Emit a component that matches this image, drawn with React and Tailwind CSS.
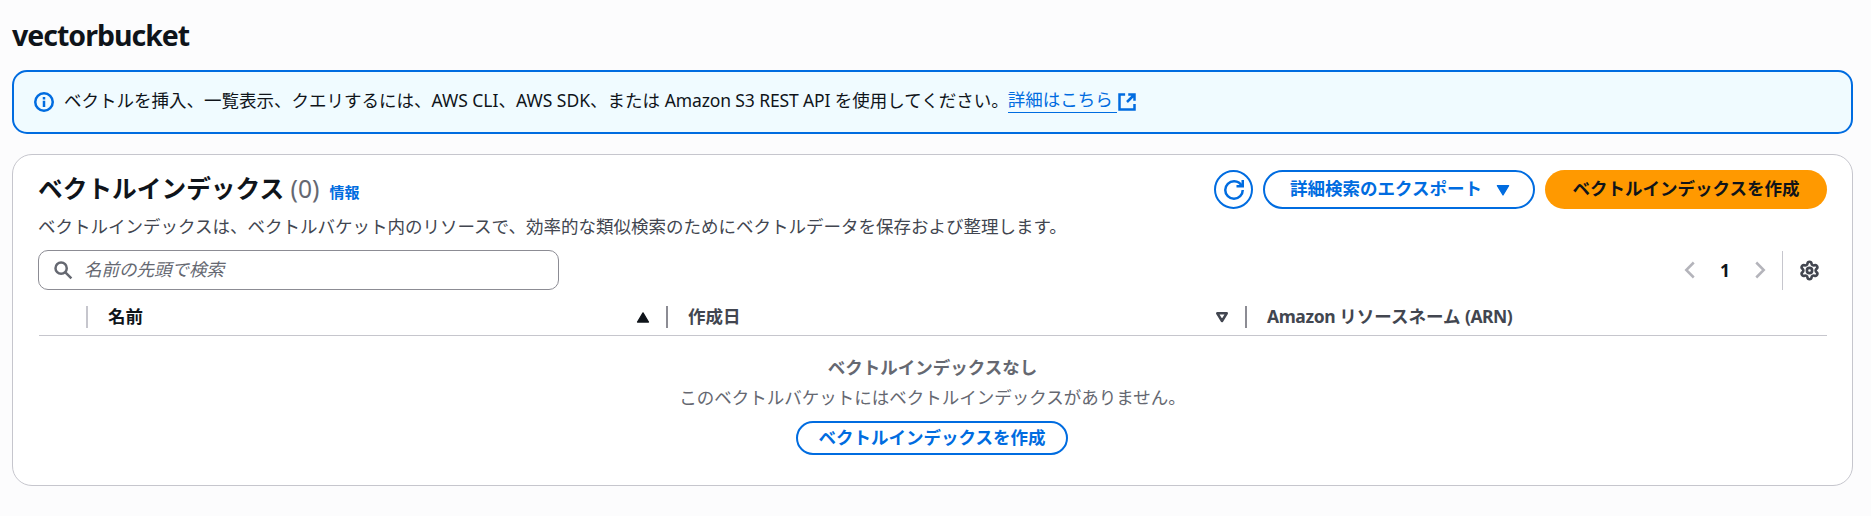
import { Settings } from 'lucide-react';

const svg = 'fill-none stroke-current stroke-2';

function Refresh() {
  return (
    <svg viewBox="0 0 16 16" className={svg + ' h-5 w-5'}>
      <path d="M10 5h5V0" />
      <path d="M15 8a7 7 0 1 1-7-7 6.87 6.87 0 0 1 6.3 4" />
    </svg>
  );
}

function Info() {
  return (
    <svg viewBox="0 0 16 16" className={svg + ' h-5 w-5 shrink-0'}>
      <circle cx="8" cy="8" r="7" />
      <path d="M8 12V7M8 6V4" />
    </svg>
  );
}

function External() {
  return (
    <svg viewBox="0 0 16 16" className={svg + ' h-5 w-5'}>
      <path d="M14 9.500V14H2V2h4.500" />
      <path d="M9 2h5v5M14 2 8 8" />
    </svg>
  );
}

const blue = 'text-[#006ce0]';

export default function App() {
  return (
    <div className="h-[516px] w-[1871px] bg-[#fcfcfd] pl-3 pr-[18px] pt-[17px] font-['Noto_Sans','Noto_Sans_CJK_JP',sans-serif] text-[17.5px] leading-[25px] text-[#0f141a]">
      <h1 className="h-[53px] text-[28.5px] font-bold leading-[36px] tracking-[-1px]">vectorbucket</h1>
      <div className={`flex h-16 items-center rounded-[15px] border-2 border-[#006ce0] bg-[#f0fbff] pl-5 ${blue}`}>
        <Info />
        <p className="ml-[10px] whitespace-nowrap pb-1 text-[#0f141a]">
          ベクトルを挿入、一覧表示、クエリするには、<span className="tracking-[-0.02px]">AWS CLI</span>、AWS SDK、または <span className="tracking-[-0.12px]">Amazon S3 REST API </span>を使用してください。
        </p>
        <a className="ml-[-1px] flex items-center whitespace-nowrap"><span className="mb-1 whitespace-pre border-b border-[#006ce0]">詳細はこちら </span><External /></a>
      </div>

      <section className="mt-5 h-[332px] rounded-[20px] border border-[#c6c6cd] bg-white pl-[26px] pr-[25px] pt-[15px]">
        <div className="-ml-px flex h-[39px] items-center gap-[10px]">
          <h2 className="whitespace-nowrap pb-px text-[24.7px] font-bold leading-[30px]">
            ベクトルインデックス <span className="font-normal text-[#656871]">(0)</span>
          </h2>
          <a className={`mt-[5px] text-[15px] font-bold ${blue}`}>情報</a>
          <div className="ml-auto flex gap-[10px] font-bold">
            <button className={`flex h-[39px] w-[39px] items-center justify-center rounded-full border-2 border-[#006ce0] ${blue}`}><Refresh /></button>
            <button className={`flex h-[39px] w-[272px] items-center rounded-full border-2 border-[#006ce0] pl-[25px] ${blue}`}>
              <span className="pb-[2px]">詳細検索のエクスポート</span>
              <svg viewBox="0 0 16 16" className="ml-[11px] h-5 w-5 fill-current"><path d="M3.500 4.500h9l-4.500 7.500z" stroke="currentColor" strokeLinejoin="round" /></svg>
            </button>
            <button className="h-[39px] w-[282px] rounded-full bg-[#ff9900] pb-[2px]">ベクトルインデックスを作成</button>
          </div>
        </div>
        <p className="-ml-px mt-[5px] text-[#424650]">ベクトルインデックスは、ベクトルバケット内のリソースで、効率的な類似検索のためにベクトルデータを保存および整理します。</p>

        <div className="mt-[11px] flex h-10 items-center">
          <div className="-ml-px flex h-10 w-[521px] items-center rounded-[10px] border border-[#8c8c94] pl-[14px] text-[#656871]">
            <svg viewBox="0 0 16 16" className={svg + ' h-5 w-5'}><circle cx="6.500" cy="6.500" r="4.500" /><path d="m9.700 9.700 5 5" /></svg>
            <span className="ml-[11px] pb-[2px] italic">名前の先頭で検索</span>
          </div>
          <div className="ml-auto flex items-center text-[#b4b4bb]">
            <svg viewBox="0 0 16 16" className={svg + ' h-5 w-5'}><path d="M11 2 5 8l6 6" /></svg>
            <span className="w-[50px] text-center font-bold text-[#0f141a]">1</span>
            <svg viewBox="0 0 16 16" className={svg + ' h-5 w-5'}><path d="m5 2 6 6-6 6" /></svg>
            <span className="ml-3 h-[39px] w-px bg-[#c6c6cd]" />
            <Settings size={21} strokeWidth={3} className="ml-4 mr-[7px] text-[#424650]" />
          </div>
        </div>

        <div className="flex h-[46px] items-center border-b border-[#c6c6cd] pt-[8px] font-bold text-[#424650]">
          <span className="ml-[47px] h-[22px] w-[2px] bg-[#c6c6cd]" />
          <span className="ml-5 text-[#0f141a]">名前</span>
          <svg viewBox="0 0 16 16" className="ml-auto h-5 w-5 fill-[#0f141a]"><path d="m8 4.700 4.400 7.300H3.600z" stroke="#0f141a" strokeLinejoin="round" /></svg>
          <div className="ml-[13px] flex w-[1161px] items-center">
            <span className="h-[22px] w-[2px] bg-[#8c8c94]" />
            <span className="ml-5">作成日</span>
            <svg viewBox="0 0 16 16" className={svg + ' ml-auto h-5 w-5'} strokeLinejoin="round"><path d="M4.200 5h7.600L8 11.200z" /></svg>
            <div className="ml-[13px] flex w-[582px] items-center">
              <span className="h-[22px] w-[2px] bg-[#8c8c94]" />
              <span className="ml-5"><span className="tracking-[-0.4px]">Amazon </span>リソースネーム <span className="tracking-[-0.5px]">(ARN)</span></span>
            </div>
          </div>
        </div>

        <div className="flex flex-col items-center pr-[1px] pt-[19px] text-[#656871]">
          <b className="mb-[5px]">ベクトルインデックスなし</b>
          <p>このベクトルバケットにはベクトルインデックスがありません。</p>
          <button className={`mr-px mt-[11px] h-[34px] w-[272px] rounded-full border-2 border-[#006ce0] pb-[2px] font-bold leading-[26px] ${blue}`}>ベクトルインデックスを作成</button>
        </div>
      </section>
    </div>
  );
}
